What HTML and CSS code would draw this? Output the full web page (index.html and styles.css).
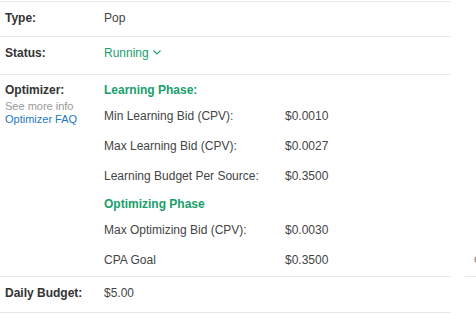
FILE: index.html
```html
<!DOCTYPE html>
<html>
<head>
    <title>Campaign Details</title>
    <link rel="stylesheet" href="styles.css">
</head>
<body>
<div class="wrap">
    <div class="panel">
        <div class="row row-type">
            <div class="label">Type:</div>
            <div class="value">Pop</div>
        </div>
        <div class="row row-status">
            <div class="label">Status:</div>
            <div class="value status">Running
                <svg class="chevron" width="8" height="5" viewBox="0 0 8 5"><polyline points="0.5,0.5 4,4 7.5,0.5" fill="none" stroke="#18a06a" stroke-width="1.1"/></svg>
            </div>
        </div>
        <div class="row row-optimizer">
            <div class="label">
                Optimizer:
                <div class="hint">See more info</div>
                <a class="faq" href="#">Optimizer FAQ</a>
            </div>
            <div class="value phases">
                <div class="phase">Learning Phase:</div>
                <div class="item"><span class="item-name">Min Learning Bid (CPV):</span><span>$0.0010</span></div>
                <div class="item"><span class="item-name">Max Learning Bid (CPV):</span><span>$0.0027</span></div>
                <div class="item"><span class="item-name">Learning Budget Per Source:</span><span>$0.3500</span></div>
                <div class="phase">Optimizing Phase</div>
                <div class="item"><span class="item-name">Max Optimizing Bid (CPV):</span><span>$0.0030</span></div>
                <div class="item"><span class="item-name">CPA Goal</span><span>$0.3500</span></div>
            </div>
        </div>
        <div class="row row-budget">
            <div class="label">Daily Budget:</div>
            <div class="value">$5.00</div>
        </div>
    </div>
    <div class="side">
        <div class="side-row">c</div>
    </div>
</div>
</body>
</html>
```

FILE: styles.css
```css
body {
    margin: 0;
    padding-top: 1px;
    font-family: "Liberation Sans", Arial, sans-serif;
    font-size: 12px;
    line-height: 14px;
    color: #444;
    background: #fff;
}
.wrap {
    display: flex;
}
.panel {
    width: 451px;
    flex: none;
}
.row {
    display: flex;
    border-top: 1px solid #e9e9e9;
    padding: 9px 0 11px;
}
.row-status {
    padding-bottom: 14px;
}
.row-optimizer {
    padding: 2px 0 1px;
}
.row-budget {
    padding-bottom: 12px;
    border-bottom: 1px solid #e9e9e9;
}
.label {
    width: 99px;
    padding-left: 5px;
    flex: none;
    font-weight: bold;
    color: #333;
}
.row-optimizer .label {
    padding-top: 6px;
}
.hint {
    margin-top: 3px;
    font-size: 11px;
    line-height: 13px;
    font-weight: normal;
    color: #999;
}
.faq {
    display: block;
    font-size: 11px;
    line-height: 13px;
    font-weight: normal;
    color: #2478c5;
    text-decoration: none;
}
.status {
    color: #18a06a;
}
.chevron {
    margin-left: 1px;
    vertical-align: 2px;
}
.phases {
    flex: 1;
}
.phase {
    padding: 6px 0 4px;
    font-weight: bold;
    color: #18a06a;
}
.item {
    display: flex;
    padding: 8px 0;
}
.item-name {
    width: 181px;
    flex: none;
}
.side {
    flex: 1;
    margin-left: 14px;
}
.side-row {
    height: 265px;
    padding: 0 0 10px 9px;
    border-bottom: 1px solid #e9e9e9;
    display: flex;
    align-items: flex-end;
    color: #777;
}
```
